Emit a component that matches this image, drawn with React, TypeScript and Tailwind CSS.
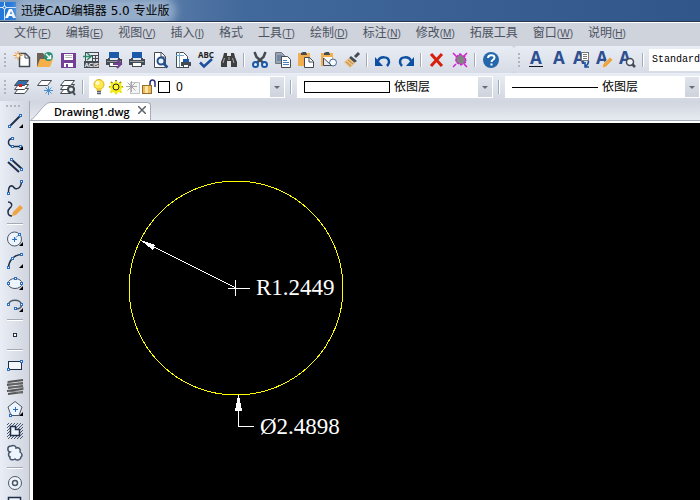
import React from "react";
import clsx from "clsx";

interface MenuItem {
  label: string;
  hotkey?: string;
}

interface Tool {
  name: string;
  icon: React.ReactNode;
  flyout?: boolean;
}

const navy = "#1f2f4a";
const blue = "#1a5aa8";
const dark = "#454b52";
const node = "#2a6fc0";

function Icon({ children }: { children: React.ReactNode }) {
  return (
    <svg width="18" height="18" viewBox="0 0 18 18" fill="none" className="shrink-0 overflow-visible" aria-hidden="true">
      {children}
    </svg>
  );
}

// small square handle used on the draw tools
function Node({ x, y }: { x: number; y: number }) {
  return <rect x={x - 1} y={y - 1} width="2" height="2" fill="#fff" stroke={node} />;
}

function Printer() {
  return (
    <g>
      <rect x="4" y="1" width="10" height="6" fill={blue} />
      <path d="M1 8h2v-1h2v2h8V7h2v1h2v6h-3v-3H4v3H1z" fill={dark} />
      <rect x="2" y="10" width="14" height="1" fill="#8e959e" />
      <rect x="4.500" y="11.500" width="9" height="4" fill="#fff" stroke={dark} />
    </g>
  );
}

function Letter({ x = 1, children }: { x?: number; children?: React.ReactNode }) {
  return (
    <Icon>
      <text x={x} y="13" fontSize="17" fontWeight="700" fill="#2c4f91" fontFamily="'Noto Sans', sans-serif">
        A
      </text>
      {children}
    </Icon>
  );
}

function Sheets({ top }: { top: string }) {
  return (
    <g stroke={dark} fill="#fff">
      <path d="M1.500 15.500l4-5h10l-4 5z" />
      <path d="M1.500 11.500l4-5h10l-4 5z" />
      <path d="M1.500 7.500l4-5h10l-4 5z" fill={top} />
    </g>
  );
}

const menus: MenuItem[] = [
  { label: "文件", hotkey: "F" },
  { label: "编辑", hotkey: "E" },
  { label: "视图", hotkey: "V" },
  { label: "插入", hotkey: "I" },
  { label: "格式" },
  { label: "工具", hotkey: "T" },
  { label: "绘制", hotkey: "D" },
  { label: "标注", hotkey: "N" },
  { label: "修改", hotkey: "M" },
  { label: "拓展工具" },
  { label: "窗口", hotkey: "W" },
  { label: "说明", hotkey: "H" },
];

const fileTools: Tool[][] = [
  [
    {
      name: "新建",
      icon: (
        <Icon>
          <path d="M6.500 2.500h6l4 4v9h-10z" fill="#fff" stroke={dark} strokeWidth="1.500" />
          <path d="M12 2v5h5" stroke={dark} />
          <path d="M5 0v9M.5 4.500h9M2 1.500l6 6M8 1.500l-6 6" stroke="#e8912d" />
          <circle cx="5" cy="4.500" r="1.500" fill="#fff3d8" />
        </Icon>
      ),
    },
    {
      name: "打开",
      icon: (
        <Icon>
          <path d="M1 2h6l2 3v11H1z" fill="#6b6157" />
          <path d="M4 8h13l-3 8H1z" fill="#f6b04a" />
          <circle cx="12.500" cy="5.500" r="4.500" fill="#2a9173" />
          <path d="M10 3l4 4M14.500 4v3.500H11" stroke="#fff" strokeWidth="1.500" />
        </Icon>
      ),
    },
    {
      name: "保存",
      icon: (
        <Icon>
          <rect x="2" y="2" width="15" height="15" fill="#743f97" />
          <rect x="5" y="3" width="9" height="6" fill="#fff" />
          <path d="M6 4.500h7M6 6.500h7" stroke="#b8b8b8" />
          <rect x="5" y="12" width="9" height="4" fill="#fff" />
          <rect x="7" y="13" width="2" height="3" fill="#743f97" />
        </Icon>
      ),
    },
    {
      name: "输出 ACIS",
      icon: (
        <Icon>
          <rect x="3.500" y="1.500" width="13" height="14" fill="#e6eaef" stroke={dark} />
          <path d="M9 4.500h7M10.500 4v6M13.500 4v6M10 7.500h6" stroke={dark} />
          <path d="M1 5.500h7M5 2l4 3.500L5 9" stroke="#2a8b6b" strokeWidth="1.500" />
          <rect x="2" y="10" width="15" height="7" fill={dark} />
          <text x="2.500" y="16" fontSize="6" fontWeight="700" fill="#fff" fontFamily="'Liberation Sans', sans-serif">
            ACIS
          </text>
        </Icon>
      ),
    },
    {
      name: "打印输出",
      icon: (
        <Icon>
          <Printer />
          <path d="M8 13h8M12 9l4 4-4 4" stroke="#743f97" strokeWidth="2" />
        </Icon>
      ),
    },
    { name: "打印", icon: <Icon><Printer /></Icon> },
    {
      name: "打印预览",
      icon: (
        <Icon>
          <path d="M3.500 1.500h7l4 4v11h-11z" fill="#fff" stroke={dark} />
          <path d="M10 1v5h4" stroke={dark} />
          <circle cx="10" cy="10" r="3.500" fill="#eaf2fb" stroke="#24508f" strokeWidth="2" />
          <path d="M12.500 12.500l4 4" stroke="#24508f" strokeWidth="2.500" />
        </Icon>
      ),
    },
    {
      name: "页面设置",
      icon: (
        <Icon>
          <path d="M2.500 1.500h7l4 4v11h-11z" fill="#fff" stroke={dark} />
          <path d="M5.500 1v15M2 4.500h8" stroke="#6fa8cf" />
          <rect x="9" y="8" width="6" height="3" fill={blue} />
          <rect x="7" y="11" width="10" height="4" fill={dark} />
          <rect x="9.500" y="13.500" width="5" height="3" fill="#fff" stroke={dark} />
        </Icon>
      ),
    },
    {
      name: "拼写检查",
      icon: (
        <Icon>
          <text x="1" y="7" fontSize="8" fontWeight="700" fill="#1d1d1d" fontFamily="'Noto Sans', sans-serif">
            ABC
          </text>
          <path d="M3 11.500l4 4 8-7.500" stroke="#1c4f9c" strokeWidth="2.500" />
        </Icon>
      ),
    },
    {
      name: "查找",
      icon: (
        <Icon>
          <path d="M4 2h3v3h4V2h3l1 4 2 5v5h-6v-6H7v6H1v-5l2-5z" fill="#3f3f40" />
          <path d="M4.500 7l-1.500 5M9 6v3M12.500 7l1.500 5" stroke="#a9a9a9" />
        </Icon>
      ),
    },
  ],
  [
    {
      name: "剪切",
      icon: (
        <Icon>
          <path d="M3.500 1l2 5 7 6M14.500 1l-2 5-7 6" stroke={dark} strokeWidth="2.500" />
          <circle cx="4.500" cy="13.500" r="2.500" fill="#e6eaf2" stroke={blue} strokeWidth="2" />
          <circle cx="13.500" cy="13.500" r="2.500" fill="#e6eaf2" stroke={blue} strokeWidth="2" />
        </Icon>
      ),
    },
    {
      name: "复制",
      icon: (
        <Icon>
          <path d="M1.500 1.500h6l3 3v8h-9z" fill="#9ba5b2" stroke="#6f7780" />
          <path d="M3 5h5M3 7h5M3 9h5" stroke="#4b6c98" />
          <path d="M7.500 5.500h6l3 3v8h-9z" fill="#fff" stroke={dark} />
          <path d="M9 9.500h4M9 11.500h6M9 13.500h6" stroke="#4681bd" />
        </Icon>
      ),
    },
    {
      name: "粘贴",
      icon: (
        <Icon>
          <path d="M1 2h12v13H1z" fill="#f0ae4e" />
          <path d="M4 4V2l2-1h3l1 3z" fill={dark} />
          <path d="M7.500 6.500h5l4 4v6h-9z" fill="#fff" stroke={dark} />
          <path d="M12 6v5h4" stroke={dark} />
        </Icon>
      ),
    },
    {
      name: "选择性粘贴",
      icon: (
        <Icon>
          <path d="M1 2h12v13H1z" fill="#f0ae4e" />
          <path d="M4 4V2l2-1h3l1 3z" fill={dark} />
          <path d="M3 6h9v7H3z" fill="#fff" />
          <circle cx="13" cy="11.500" r="3.500" fill="#f5f9ff" stroke="#476994" />
          <path d="M3.500 7v7.500h8z" fill="#e2ebf5" stroke={dark} />
        </Icon>
      ),
    },
    {
      name: "格式刷",
      icon: (
        <Icon>
          <path d="M16 2l-4 4" stroke={dark} strokeWidth="3" />
          <path d="M8 5l6 5-3 2-5-5z" fill={dark} />
          <path d="M6 7l6 5-5 5-6-6z" fill="#e8bf80" />
          <path d="M3 11l5 4M5 9l5 4" stroke="#bb8a47" />
        </Icon>
      ),
    },
  ],
  [
    {
      name: "放弃",
      icon: (
        <Icon>
          <path d="M4 10c2-5 11-5 11 1 0 2-1 3-2 4" stroke="#0d4fa3" strokeWidth="2.500" />
          <path d="M1 6v9h8z" fill="#0d4fa3" />
        </Icon>
      ),
    },
    {
      name: "重做",
      icon: (
        <Icon>
          <path d="M14 10C12 5 3 5 3 11c0 2 1 3 2 4" stroke="#0d4fa3" strokeWidth="2.500" />
          <path d="M17 6v9H9z" fill="#0d4fa3" />
        </Icon>
      ),
    },
  ],
  [
    {
      name: "删除",
      icon: (
        <Icon>
          <path d="M4 4l9 10M13 4L4 14" stroke="#d6200c" strokeWidth="3" strokeLinecap="square" />
        </Icon>
      ),
    },
    {
      name: "清除",
      icon: (
        <Icon>
          <path d="M2 2l3 3M16 2l-3 3M2 16l3-3M16 16l-3-3" stroke="#d51fd5" strokeWidth="1.500" />
          <path d="M5 6l4-3 5 3 1 5-5 3-5-3z" fill="#828282" stroke="#d51fd5" strokeWidth="1.500" strokeDasharray="3 1" />
        </Icon>
      ),
    },
  ],
  [
    {
      name: "帮助",
      icon: (
        <Icon>
          <circle cx="9" cy="9" r="8" fill="#2467ab" />
          <path d="M6 7c0-4 6.500-3.500 6.500-.5C12.500 9 9.500 8.500 9.500 11M9.500 12.500v2" stroke="#fff" strokeWidth="2" />
        </Icon>
      ),
    },
  ],
];

const textTools: Tool[] = [
  { name: "多行文字", icon: <Letter x={3}><path d="M2 15.500h14" stroke="#101828" /></Letter> },
  { name: "单行文字", icon: <Letter x={3} /> },
  {
    name: "文字导出",
    icon: (
      <Letter x={0}>
        <rect x="8.500" y="1.500" width="7" height="8" fill="#fff" stroke="#777" />
        <path d="M10 3.500h4M10 5.500h4M10 7.500h4" stroke="#777" />
        <path d="M15.500 10c0 3-1 4-3 5M12 11v5h4" stroke="#1c4f9c" strokeWidth="1.500" />
      </Letter>
    ),
  },
  {
    name: "编辑文字",
    icon: (
      <Letter x={0}>
        <path d="M14 6l3 3-7 7-4 1 1-4z" fill="#e9a54a" stroke="#f2f4f9" strokeWidth=".5" />
      </Letter>
    ),
  },
  {
    name: "查找文字",
    icon: (
      <Letter x={0}>
        <circle cx="11" cy="11" r="3.500" fill="#eef2f8" stroke={dark} strokeWidth="1.500" />
        <path d="M13 13l3 3" stroke={dark} strokeWidth="2.500" />
      </Letter>
    ),
  },
];

const layerTools: Tool[] = [
  {
    name: "图层特性",
    icon: (
      <Icon>
        <Sheets top="#2f6fae" />
        <rect x="6" y="6" width="3" height="3" fill="#e02020" />
      </Icon>
    ),
  },
  {
    name: "冻结图层",
    icon: (
      <Icon>
        <path d="M1.500 7.500l4-5h10l-4 5z" fill="#fff" stroke={dark} />
        <path d="M12.500 8v9M8 12.500h9M9.500 9.500l6 6M15.500 9.500l-6 6" stroke="#4a90cf" />
      </Icon>
    ),
  },
  {
    name: "图层浏览",
    icon: (
      <Icon>
        <Sheets top="#fff" />
        <circle cx="12" cy="11.500" r="3" fill="#e6ebf2" stroke={dark} strokeWidth="2" />
        <path d="M14 14l2 3" stroke={dark} strokeWidth="2" />
      </Icon>
    ),
  },
];

const drawTools: Tool[][] = [
  [
    {
      name: "直线",
      flyout: true,
      icon: <Icon><path d="M3.500 14.500l11-11" stroke={navy} strokeWidth="2" /><Node x={3.5} y={14.5} /><Node x={14.5} y={3.5} /></Icon>,
    },
    {
      name: "多段线",
      flyout: true,
      icon: <Icon><path d="M8 5.500C2 2 0 12 6.500 12.500h9" stroke={navy} strokeWidth="1.500" /><Node x={6.5} y={4.5} /><Node x={6.5} y={12.5} /><Node x={14.5} y={12.5} /></Icon>,
    },
    {
      name: "多线",
      icon: <Icon><path d="M5 3l11 10M2 6l11 10" stroke={navy} strokeWidth="2" /><Node x={5.5} y={3.5} /><Node x={15.5} y={13.5} /></Icon>,
    },
    {
      name: "样条曲线",
      icon: <Icon><path d="M2.500 15.500C2 5 7 8 8 9.500s7 3 7.500-6.500" stroke={navy} strokeWidth="1.500" /><Node x={2.5} y={15.5} /><Node x={15.5} y={3.5} /></Icon>,
    },
    {
      name: "徒手画",
      icon: (
        <Icon>
          <path d="M2 2c3 0 5 3 3 5S2 9 2 12s2 4 4 4" stroke={navy} strokeWidth="1.500" />
          <path d="M14 5l3 3-7 7-4 1 1-4z" fill="#eda545" />
        </Icon>
      ),
    },
  ],
  [
    {
      name: "圆",
      flyout: true,
      icon: (
        <Icon>
          <circle cx="8.500" cy="9" r="7" fill="#edf4fc" stroke="#4e5968" />
          <path d="M8.500 9l5-5" stroke={node} strokeDasharray="2 1" />
          <path d="M6 9.500h5M8.500 7v5" stroke={node} />
          <Node x={13.5} y={4.5} />
        </Icon>
      ),
    },
    {
      name: "圆弧",
      flyout: true,
      icon: <Icon><path d="M2.500 15.500C3 8 8 3 15.500 2.500" stroke={navy} strokeWidth="1.500" /><Node x={2.5} y={15.5} /><Node x={6.5} y={6.5} /><Node x={15.5} y={2.5} /></Icon>,
    },
    {
      name: "椭圆",
      flyout: true,
      icon: <Icon><ellipse cx="9" cy="9.500" rx="7" ry="5" fill="#edf4fc" stroke="#4e5968" /><Node x={2.5} y={9.5} /><Node x={15.5} y={9.5} /><Node x={9.5} y={4.5} /></Icon>,
    },
    {
      name: "椭圆弧",
      flyout: true,
      icon: <Icon><path d="M2.500 9C3 2.500 15 2.500 15.500 9c0 2-2 4-6 4" stroke="#4e5968" strokeWidth="1.500" /><Node x={2.5} y={8.5} /><Node x={15.5} y={8.5} /><Node x={9.5} y={12.5} /></Icon>,
    },
  ],
  [{ name: "点", icon: <Icon><rect x="7.500" y="7.500" width="3" height="3" fill="#fff" stroke={navy} /></Icon> }],
  [
    {
      name: "矩形",
      icon: <Icon><rect x="2.500" y="5.500" width="13" height="8" fill="#f4f8fd" stroke={navy} /><Node x={2.5} y={13.5} /><Node x={15.5} y={5.5} /></Icon>,
    },
    {
      name: "螺旋",
      icon: (
        <Icon>
          <path d="M2 4l15-2M1 7l16-2M2 10l15-2M1 13l16-2M2 16l15-2" stroke="#555" strokeWidth="2" />
          <path d="M2 3v3l15 0M2 9l15 0v3M2 13l15 2" stroke="#707070" />
        </Icon>
      ),
    },
    {
      name: "多边形",
      flyout: true,
      icon: (
        <Icon>
          <path d="M9 1.500l7 5.500-3 8.500H5L2 7z" fill="#edf4fc" stroke="#4e5968" />
          <path d="M7 9.500h5M9.500 7v5" stroke={node} />
          <Node x={4.5} y={15.5} />
        </Icon>
      ),
    },
    {
      name: "边界",
      icon: (
        <Icon>
          <path
            d="M1 3l2-2M1 6l5-5M1 9l8-8M1 12L12 1M1 15L15 1M2 17L17 2M5 17L17 5M8 17l9-9M11 17l6-6M14 17l3-3"
            stroke="#46536a"
          />
          <path d="M4.500 4.500h5v3h4v6h-9z" fill="#edf4fc" stroke={navy} strokeWidth="1.500" />
        </Icon>
      ),
    },
    {
      name: "修订云线",
      icon: (
        <Icon>
          <path
            d="M4 8C1 7 1 2 5 2c3-1 5 0 5 2 3-1 5 1 4 4 3 2 2 4 1 5 0 3-4 4-6 2-3 2-6 0-5-2-2-1-2-4 0-5z"
            fill="#edf4fc"
            stroke="#46536a"
            strokeWidth="1.500"
          />
        </Icon>
      ),
    },
  ],
  [
    {
      name: "圆环",
      icon: <Icon><circle cx="9" cy="9" r="6.500" fill="#edf4fc" stroke="#4e5968" /><circle cx="9" cy="9" r="2.500" stroke="#4e5968" strokeWidth="1.500" /></Icon>,
    },
    { name: "面域", icon: <Icon><path d="M2.500 1.500h12v12h-12z" fill="#edf4fc" stroke={navy} strokeWidth="1.500" /></Icon> },
  ],
];

function Grip({ across }: { across?: boolean }) {
  return (
    <div className={clsx("flex shrink-0 gap-0.5", across ? "h-[9px] items-center pl-1.5" : "w-[10px] flex-col items-center justify-center")}>
      {[0, 1, 2, 3].map((i) => (
        <span key={i} className="h-0.5 w-0.5 bg-[#afb5c1]" />
      ))}
    </div>
  );
}

function Separator() {
  return (
    <div className="flex w-2 shrink-0 justify-center">
      <span className="h-3.5 w-0.5 border-l border-[#a5abb6] bg-white" />
    </div>
  );
}

function ToolButton({ tool, side }: { tool: Tool; side?: boolean }) {
  return (
    <button
      type="button"
      aria-label={tool.name}
      className={clsx("relative flex shrink-0 items-center justify-center", side ? "h-[22px] w-full" : "h-[22px] w-[23px]")}
    >
      {tool.icon}
      {tool.flyout && (
        <svg width="4" height="4" viewBox="0 0 4 4" className="absolute right-1.5 bottom-1" aria-hidden="true">
          <path d="M4 0v4H0z" fill="#000" />
        </svg>
      )}
    </button>
  );
}

function Combo({ label, value, className, children }: { label: string; value: string; className: string; children?: React.ReactNode }) {
  return (
    <label className={clsx("flex h-[22px] items-stretch border border-white bg-white", className)}>
      <span className="flex shrink-0 items-center">{children}</span>
      <select
        aria-label={label}
        defaultValue={value}
        className="min-w-0 flex-1 appearance-none bg-transparent text-[12px] text-black outline-none"
      >
        <option>{value}</option>
      </select>
      <span className="flex w-3.5 shrink-0 items-center justify-center bg-linear-to-b from-[#e0e4ec] to-[#cdd2dc]">
        <svg width="6" height="3" viewBox="0 0 6 3" aria-hidden="true">
          <path d="M0 0h6L3 3z" fill="#666c76" />
        </svg>
      </span>
    </label>
  );
}

function LayerState() {
  return (
    <span className="flex items-center -space-x-px">
      <Icon>
        <circle cx="9" cy="6.500" r="5" fill="#ffe84a" stroke="#d3b32c" />
        <path d="M6.500 10h5v3h-5z" fill="#f2cf3a" />
        <circle cx="7.500" cy="5" r="2" fill="#fffbd0" />
        <path d="M7 13.500h4M7 15.500h4" stroke="#5a6472" strokeWidth="1.500" />
      </Icon>
      <Icon>
        <path d="M9 2v14M2 9h14M4 4l10 10M14 4L4 14" stroke="#111" strokeWidth="1.500" />
        <path d="M9 2l2 3 4-1-1 4 3 1-3 2 1 4-4-1-2 3-2-3-4 1 1-4-3-2 3-1-1-4 4 1z" fill="#f7ec10" />
        <circle cx="9" cy="9" r="3" fill="#fff83a" stroke="#222" />
      </Icon>
      <Icon>
        <rect x="6.500" y="4.500" width="9" height="11" fill="#f4f4f4" stroke="#c4c4c4" />
        <path d="M7.500 3v11M2 8.500h11M3.500 4.500l8 8M11.500 4.500l-8 8" stroke="#a9a9a9" />
      </Icon>
      <Icon>
        <path d="M9 8V5c0-4 5-4 5 0v4" stroke="#2b2f7d" strokeWidth="1.500" />
        <rect x="1.500" y="7.500" width="9" height="8" fill="#e9bb5a" stroke="#9a6b2a" />
        <rect x="4" y="8" width="3" height="7" fill="#fbe6a8" />
      </Icon>
      <span className="mr-1.5 h-3 w-3 border border-black bg-white" />
    </span>
  );
}

function Drawing() {
  return (
    <svg className="h-full w-full" shapeRendering="crispEdges" role="img" aria-label="Drawing1">
      <circle cx="203" cy="165" r="107" fill="none" stroke="#ffff00" />
      <g stroke="#fff" fill="#fff">
        <path d="M108 117.500l95 47.500M195 165.500h22M202.500 157v16" fill="none" />
        <path d="M107 117l15 5-2 5z" stroke="none" />
        <path d="M205.500 272v31M205 303.500h16" fill="none" />
        <path d="M205 272h1l3 16h-7z" stroke="none" />
      </g>
      <g fill="#fff" fontFamily="'Liberation Serif', serif" fontSize="23">
        <text x="223" y="172">R1.2449</text>
        <text x="227" y="311">Ø2.4898</text>
      </g>
    </svg>
  );
}

export default function App() {
  return (
    <div className="flex h-screen flex-col overflow-hidden bg-[#d9dde5] font-['Noto_Sans','Noto_Sans_CJK_SC',sans-serif] text-[12px]">
      <header className="flex h-[22px] shrink-0 items-center overflow-hidden border-b border-[#26364f] bg-linear-to-r from-[#7f9bbd] via-[#42699b] via-35% to-[#31568a]">
        <svg width="17" height="18" viewBox="0 0 17 18" className="shrink-0" aria-hidden="true">
          <rect width="16" height="18" fill="#2478d8" />
          <path d="M0 5.500h16M4.500 0v18" stroke="#cfe4fb" />
          <circle cx="4.500" cy="5.500" r="1.500" fill="#2478d8" stroke="#fff" />
          <path d="M5 16l4-9h3l4 9h-3l-1-2H9l-1 2zM10 12h2l-1-3z" fill="#fff" fillRule="evenodd" />
        </svg>
        <h1 className="ml-1 rounded-full bg-[#adc0d7]/70 font-['DejaVu_Sans','Noto_Sans_CJK_SC',sans-serif] leading-4 text-black shadow-[0_0_8px_6px_#adc0d7b3]">
          迅捷CAD编辑器 5.0 专业版
        </h1>
      </header>

      <nav className="flex h-6 shrink-0 items-baseline gap-[15px] border-t border-white bg-[#cfd3dc] pl-3.5 text-[#4c5260]">
        {menus.map((menu) => (
          <button key={menu.label} type="button" className="shrink-0 leading-5 whitespace-nowrap">
            {menu.label}
            {menu.hotkey && (
              <span className="font-['Liberation_Sans',sans-serif] text-[10px]">
                (<span className="underline">{menu.hotkey}</span>)
              </span>
            )}
          </button>
        ))}
      </nav>

      <div className="flex h-[27px] shrink-0 bg-[#d2d6df]">
        <div className="flex shrink-0 items-center rounded-r bg-linear-to-b from-[#e9edf5] to-[#d6dbe5] pr-3">
          <Grip />
          {fileTools.map((group, i) => (
            <React.Fragment key={i}>
              {i > 0 && <Separator />}
              {group.map((tool) => (
                <ToolButton key={tool.name} tool={tool} />
              ))}
            </React.Fragment>
          ))}
        </div>
        <div className="flex min-w-0 flex-1 items-center rounded-l bg-linear-to-b from-[#e9edf5] to-[#d6dbe5]">
          <Grip />
          {textTools.map((tool) => (
            <ToolButton key={tool.name} tool={tool} />
          ))}
          <Separator />
          <label className="ml-0.5 flex h-[22px] min-w-0 flex-1 bg-white pl-[3px]">
            <select
              aria-label="文字样式"
              className="w-full appearance-none bg-transparent font-['Liberation_Mono',monospace] text-[10px] text-black outline-none"
            >
              <option>Standard</option>
            </select>
          </label>
        </div>
      </div>

      <div className="flex h-[28px] shrink-0 items-center bg-linear-to-b from-[#e9edf5] to-[#d2d7e1]">
        <Grip />
        {layerTools.map((tool) => (
          <ToolButton key={tool.name} tool={tool} />
        ))}
        <Separator />
        <Combo label="图层" value="0" className="mx-0.5 w-[196px] shrink-0">
          <LayerState />
        </Combo>
        <Separator />
        <Combo label="颜色" value="依图层" className="mx-0.5 w-[196px] shrink-0">
          <span className="mr-1 ml-1.5 h-3 w-[86px] border border-black" />
        </Combo>
        <Separator />
        <Combo label="线型" value="依图层" className="ml-0.5 min-w-0 flex-1">
          <span className="mr-1 ml-1.5 h-px w-[86px] bg-black" />
        </Combo>
      </div>

      <div className="flex min-h-0 flex-1">
        <aside className="flex w-[30px] shrink-0 flex-col overflow-hidden border-r border-[#a4abb7] bg-linear-to-r from-[#e9edf5] to-[#d0d5df]">
          <Grip across />
          {drawTools.map((group, i) => (
            <React.Fragment key={i}>
              {i > 0 && (
                <div className="flex h-2 shrink-0 items-center justify-center">
                  <span className="h-0.5 w-4 border-t border-[#a5abb6] bg-white" />
                </div>
              )}
              {group.map((tool) => (
                <ToolButton key={tool.name} tool={tool} side />
              ))}
            </React.Fragment>
          ))}
        </aside>

        <main className="flex min-w-0 flex-1 flex-col">
          <div className="flex h-5 shrink-0 items-end border-b border-[#a4abb7] bg-linear-to-b from-[#d0d5de] to-[#e6eaf1]">
            <svg width="20" height="18" viewBox="0 0 20 18" className="shrink-0" aria-hidden="true">
              <path d="M1 18C4 18 14 .5 20 .5V18z" fill="#fff" />
              <path d="M1 17.500C5 17 14 .5 20 .5" fill="none" stroke="#a4abb7" />
            </svg>
            <div className="flex h-[18px] items-center gap-2 rounded-tr-sm border-t border-r border-[#a4abb7] bg-white pr-1 pl-1">
              <button type="button" className="font-['Open_Sans',sans-serif] text-[11px] leading-4 font-semibold text-black">
                Drawing1.dwg
              </button>
              <button type="button" aria-label="关闭" className="pb-1">
                <svg width="8" height="8" viewBox="0 0 8 8" aria-hidden="true">
                  <path d="M0 0l8 8M8 0L0 8" stroke="#5c6068" strokeWidth="1.500" />
                </svg>
              </button>
            </div>
          </div>
          <div className="min-h-0 flex-1 bg-white pt-0.5 pl-[3px]">
            <div className="h-full overflow-hidden bg-black">
              <Drawing />
            </div>
          </div>
        </main>
      </div>
    </div>
  );
}
